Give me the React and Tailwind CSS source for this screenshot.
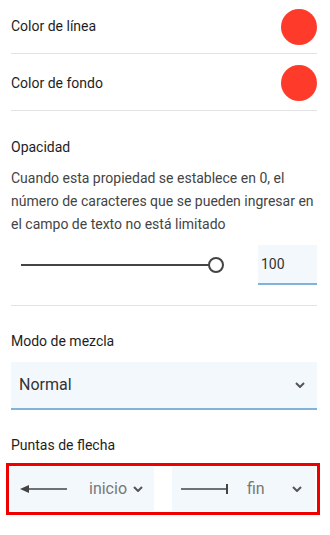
import React from 'react'

const FONT = { fontFamily: 'Roboto, "Liberation Sans", sans-serif' }

function Chevron({ className = '' }) {
  return (
    <svg width="10" height="6" viewBox="0 0 10 6" className={className}>
      <polyline points="1,1 5,5 9,1" fill="none" stroke="#555" strokeWidth="2" />
    </svg>
  )
}

function ColorRow({ label, last }) {
  return (
    <div className={`flex items-center justify-between border-b border-[#e3e3e3] ${last ? 'h-[57px] pt-[2px]' : 'h-[54px]'}`}>
      <span className="text-[14px] text-[#1e1e1e]">{label}</span>
      <span className="w-[36px] h-[36px] rounded-full bg-[#fe3a2a]" />
    </div>
  )
}

export default function App() {
  return (
    <div className="w-[330px] h-[535px] bg-white overflow-hidden" style={FONT}>
      <div className="px-[11px] w-[328px]">
        <ColorRow label="Color de línea" />
        <ColorRow label="Color de fondo" last />

        {/* Opacidad */}
        <div className="pt-[26px] pb-[20px] border-b border-[#e3e3e3]">
          <p className="text-[14px] leading-[20px] text-[#1e1e1e]">Opacidad</p>
          <p className="mt-[10px] text-[14px] leading-[23px] text-[#444]">
            Cuando esta propiedad se establece en 0, el número de caracteres que se pueden ingresar en el campo de texto no está limitado
          </p>
          <div className="mt-[9px] flex items-center">
            <div className="ml-[10px] w-[203px] flex items-center">
              <div className="flex-1 h-[2px] bg-[#444]" />
              <div className="w-[16px] h-[16px] rounded-full border-2 border-[#444] bg-white -ml-[1px]" />
            </div>
            <div className="ml-auto w-[59px] h-[40px] bg-[#f3f8fc] border-b-2 border-[#7fb3dc] flex items-center pl-[3px] text-[14px] text-[#333]">
              100
            </div>
          </div>
        </div>

        {/* Modo de mezcla */}
        <div className="pt-[25px]">
          <p className="text-[14px] leading-[20px] text-[#1e1e1e]">Modo de mezcla</p>
          <div className="mt-[11px] h-[48px] bg-[#f3f8fc] border-b-2 border-[#7fb3dc] flex items-center justify-between pl-[8px] pr-[12px]">
            <span className="text-[16px] text-[#333]">Normal</span>
            <Chevron />
          </div>
        </div>

        {/* Puntas de flecha */}
        <div className="pt-[25px]">
          <p className="text-[14px] leading-[20px] text-[#1e1e1e]">Puntas de flecha</p>
          <div className="mt-[8px] -ml-[5px] -mr-[3px] border-[3px] border-[#ee0000] pl-[2px] pr-[2px] py-[1px] flex gap-[18px]">
            <div className="w-[144px] h-[44px] bg-[#f3f8fc] flex items-center pl-[9px] pr-[11px]">
              <svg width="48" height="10" viewBox="0 0 48 10">
                <polygon points="0,5 9,1 9,9" fill="#444" />
                <line x1="8" y1="5" x2="47" y2="5" stroke="#444" strokeWidth="1.5" />
              </svg>
              <span className="ml-[21px] text-[16px] text-[#777]">inicio</span>
              <Chevron className="ml-auto" />
            </div>
            <div className="w-[144px] h-[44px] bg-[#f3f8fc] flex items-center pl-[9px] pr-[13px]">
              <svg width="48" height="12" viewBox="0 0 48 12">
                <line x1="0" y1="6" x2="46" y2="6" stroke="#444" strokeWidth="1.5" />
                <line x1="46" y1="1" x2="46" y2="11" stroke="#444" strokeWidth="2" />
              </svg>
              <span className="ml-[18px] text-[16px] text-[#777]">fin</span>
              <Chevron className="ml-auto" />
            </div>
          </div>
        </div>
      </div>
    </div>
  )
}
